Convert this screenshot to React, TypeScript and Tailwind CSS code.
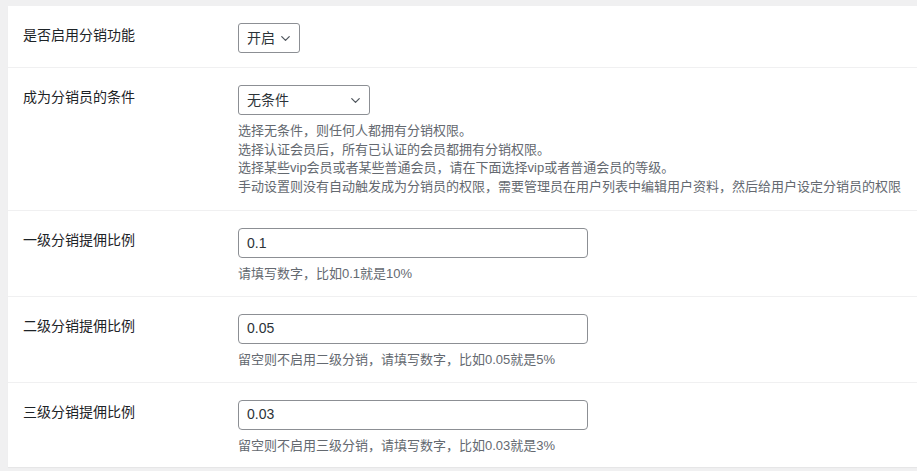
import { ChevronDown } from "lucide-react";

const FONT = { fontFamily: '"Liberation Sans", "Noto Sans CJK SC", sans-serif' };

function Row({ label, children, last, pb = "pb-[14px]" }: { label: string; children: React.ReactNode; last?: boolean; pb?: string }) {
  return (
    <div className={`flex pt-[17px] ${pb} ${last ? "" : "border-b border-[#f0f0f1]"}`}>
      <div className="w-[230px] shrink-0 pl-[15px] pt-[2px] text-[14px] text-[#1d2327]">{label}</div>
      <div className="flex flex-col">{children}</div>
    </div>
  );
}

function Desc({ lines }: { lines: string[] }) {
  return (
    <div className="mt-[7px] text-[13px] leading-[18.6px] text-[#646970]">
      {lines.map((l) => (
        <div key={l} className="whitespace-nowrap">{l}</div>
      ))}
    </div>
  );
}

function Select({ value, width }: { value: string; width: string }) {
  return (
    <div className={`flex h-[30px] ${width} items-center justify-between rounded-[3px] border border-[#8c8f94] bg-white pl-[8px] pr-[6px] text-[14px] text-[#2c3338]`}>
      <span>{value}</span>
      <ChevronDown size={15} strokeWidth={2} className="text-[#50575e]" />
    </div>
  );
}

function Input({ value }: { value: string }) {
  return (
    <div className="flex h-[30px] w-[350px] items-center rounded-[4px] border border-[#8c8f94] bg-white px-[8px] text-[14px] text-[#2c3338]">
      {value}
    </div>
  );
}

export default function App() {
  return (
    <div style={FONT} className="h-[471px] w-[917px] overflow-hidden bg-[#f0f0f1] pl-[8px] pt-[6px]">
      <div className="w-[920px] bg-white shadow-[0_1px_1px_rgba(0,0,0,0.04)]">
        <Row label="是否启用分销功能">
          <Select value="开启" width="w-[62px]" />
        </Row>
        <Row label="成为分销员的条件">
          <Select value="无条件" width="w-[132px]" />
          <Desc
            lines={[
              "选择无条件，则任何人都拥有分销权限。",
              "选择认证会员后，所有已认证的会员都拥有分销权限。",
              "选择某些vip会员或者某些普通会员，请在下面选择vip或者普通会员的等级。",
              "手动设置则没有自动触发成为分销员的权限，需要管理员在用户列表中编辑用户资料，然后给用户设定分销员的权限",
            ]}
          />
        </Row>
        <Row label="一级分销提佣比例" pb="pb-[12px]">
          <Input value="0.1" />
          <Desc lines={["请填写数字，比如0.1就是10%"]} />
        </Row>
        <Row label="二级分销提佣比例" pb="pb-[12px]">
          <Input value="0.05" />
          <Desc lines={["留空则不启用二级分销，请填写数字，比如0.05就是5%"]} />
        </Row>
        <Row label="三级分销提佣比例" pb="pb-[12px]" last>
          <Input value="0.03" />
          <Desc lines={["留空则不启用三级分销，请填写数字，比如0.03就是3%"]} />
        </Row>
      </div>
    </div>
  );
}
